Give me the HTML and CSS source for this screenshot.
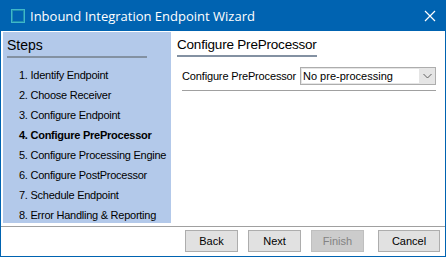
FILE: index.html
```html
<!DOCTYPE html>
<html lang="en">

<head>
    <meta charset="UTF-8">
    <link rel="stylesheet" href="styles.css">
    <title>Inbound Integration Endpoint Wizard</title>
</head>

<body>

    <div class="window">
        <div class="titlebar">
            <span class="app-icon"></span>
            <span class="title">Inbound Integration Endpoint Wizard</span>
            <svg class="close" width="12" height="12" viewBox="0 0 12 12">
                <path d="M1 1 L11 11 M11 1 L1 11" stroke="#fff" stroke-width="1.2" fill="none" />
            </svg>
        </div>

        <div class="content">
            <div class="steps">
                <div class="steps-title">Steps</div>
                <ol class="step-list">
                    <li>1. Identify Endpoint</li>
                    <li>2. Choose Receiver</li>
                    <li>3. Configure Endpoint</li>
                    <li class="current">4. Configure PreProcessor</li>
                    <li>5. Configure Processing Engine</li>
                    <li>6. Configure PostProcessor</li>
                    <li>7. Schedule Endpoint</li>
                    <li>8. Error Handling &amp; Reporting</li>
                </ol>
            </div>

            <div class="page">
                <div class="page-title">Configure PreProcessor</div>
                <div class="field">
                    <label for="pre">Configure PreProcessor</label>
                    <div class="select" id="pre">
                        <span class="select-value">No pre-processing</span>
                        <span class="select-arrow">
                            <svg width="9" height="6" viewBox="0 0 9 6">
                                <path d="M0.5 1 L4.5 5 L8.5 1" stroke="#606060" stroke-width="1" fill="none" />
                            </svg>
                        </span>
                    </div>
                </div>
                <div class="field-line"></div>
            </div>
        </div>

        <div class="buttons">
            <button type="button">Back</button>
            <button type="button">Next</button>
            <button type="button" disabled>Finish</button>
            <button type="button" class="cancel">Cancel</button>
        </div>
    </div>

</body>

</html>
```

FILE: styles.css
```css
body {
    margin: 0;
    font-family: "Liberation Sans", Arial, sans-serif;
    font-size: 11px;
    color: #000;
}

.window {
    width: 446px;
    height: 257px;
    box-sizing: border-box;
    border: 1px solid #0063b1;
    border-top: none;
    background: #fff;
    display: flex;
    flex-direction: column;
}

.titlebar {
    height: 31px;
    margin: 0 -1px;
    background: #0063b1;
    display: flex;
    align-items: center;
    color: #fff;
}

.app-icon {
    width: 12px;
    height: 12px;
    margin-left: 11px;
    border: 1px solid #3fb8c9;
    outline: 1px solid #1f8fb0;
    outline-offset: -2px;
}

.title {
    margin-left: 5px;
    font-family: "Open Sans", sans-serif;
    font-size: 13px;
    flex: 1;
}

.close {
    margin-right: 10px;
}

.content {
    display: flex;
    height: 191px;
    margin-top: 1px;
    padding-left: 2px;
    border-bottom: 1px solid #a0a0a0;
    padding-bottom: 3px;
}

.steps {
    width: 168px;
    background: #b3c9ea;
    padding: 5px 0 0 4px;
    box-sizing: border-box;
    white-space: nowrap;
    overflow: hidden;
}

.steps-title,
.page-title {
    font-size: 14px;
    width: 140px;
    padding-bottom: 3px;
    border-bottom: 2px solid #8391a2;
    white-space: nowrap;
}

.page-title {
    font-size: 13.5px;
    letter-spacing: -0.2px;
}

.step-list {
    list-style: none;
    margin: 7px 0 0 0;
    padding: 0 0 0 12px;
}

.step-list li {
    height: 20px;
    line-height: 20px;
    letter-spacing: -0.25px;
}

.step-list .current {
    font-weight: bold;
}

.page {
    flex: 1;
    padding: 5px 9px 0 6px;
}

.field {
    display: flex;
    align-items: center;
    margin-top: 10px;
    padding-left: 5px;
}

.field label {
    width: 118px;
    white-space: nowrap;
    letter-spacing: -0.15px;
}

.select {
    flex: 1;
    height: 16px;
    border: 1px solid #adadad;
    background: #e5e5e5;
    display: flex;
}

.select-value {
    flex: 1;
    background: #fff;
    margin: 1px 0 1px 1px;
    line-height: 14px;
    padding-left: 1px;
}

.select-arrow {
    width: 16px;
    display: flex;
    align-items: center;
    justify-content: center;
}

.field-line {
    margin: 5px 0 0 5px;
    border-top: 1px solid #a0a0a0;
}

.buttons {
    display: flex;
    justify-content: flex-end;
    gap: 10px;
    padding: 3px 5px 0 0;
}

button {
    font-family: "Liberation Sans", Arial, sans-serif;
    font-size: 11px;
    height: 22px;
    width: 53px;
    background: #e1e1e1;
    border: 1px solid #adadad;
    padding: 0;
    color: #000;
}

button:disabled {
    background: #cccccc;
    border-color: #bfbfbf;
    color: #838383;
}

button.cancel {
    width: 62px;
    margin-left: 4px;
}
```
